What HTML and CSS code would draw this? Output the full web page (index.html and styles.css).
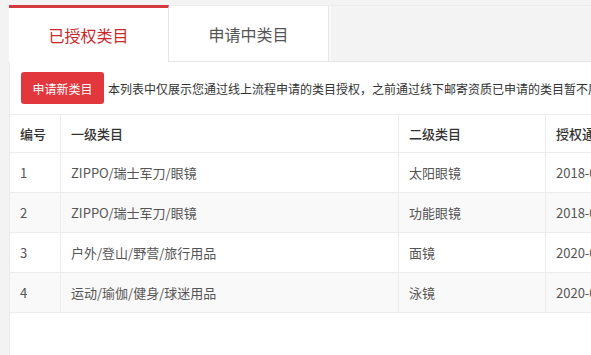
FILE: index.html
```html
<!DOCTYPE html>
<html lang="zh-CN">
<head>
  <meta charset="UTF-8">
  <title>类目授权</title>
  <link rel="stylesheet" href="styles.css">
</head>
<body>

<div class="page">
  <div class="tabs">
    <div class="tab active">已授权类目</div>
    <div class="tab">申请中类目</div>
    <div class="tab-rest"></div>
  </div>

  <div class="panel">
    <div class="toolbar">
      <button class="btn">申请新类目</button>
      <span class="tip">本列表中仅展示您通过线上流程申请的类目授权，之前通过线下邮寄资质已申请的类目暂不展示</span>
    </div>

    <table class="grid">
      <thead>
        <tr>
          <th class="c-no">编号</th>
          <th class="c-first">一级类目</th>
          <th class="c-second">二级类目</th>
          <th class="c-date">授权通过时间</th>
        </tr>
      </thead>
      <tbody>
        <tr><td>1</td><td>ZIPPO/瑞士军刀/眼镜</td><td>太阳眼镜</td><td>2018-06-12 10:21:36</td></tr>
        <tr><td>2</td><td>ZIPPO/瑞士军刀/眼镜</td><td>功能眼镜</td><td>2018-06-12 10:21:36</td></tr>
        <tr><td>3</td><td>户外/登山/野营/旅行用品</td><td>面镜</td><td>2020-03-05 14:08:19</td></tr>
        <tr><td>4</td><td>运动/瑜伽/健身/球迷用品</td><td>泳镜</td><td>2020-03-05 14:08:19</td></tr>
      </tbody>
    </table>
  </div>
</div>

</body>
</html>
```

FILE: styles.css
```css
html, body { height: 100%; }
body { margin: 0; background: #f3f3f3; font-family: "Noto Sans CJK SC", "Microsoft YaHei", sans-serif; color: #555; overflow: hidden; }
.page { width: 760px; padding: 5px 0 0 9px; height: 100%; box-sizing: border-box; display: flex; flex-direction: column; }

.tabs { display: flex; height: 56px; border-bottom: 1px solid #e6e6e6; }
.tab { width: 160px; display: flex; align-items: center; justify-content: center; font-size: 16px; color: #555; background: #fff; border-top: 1px solid #ececec; border-right: 1px solid #e6e6e6; box-sizing: border-box; padding-top: 1px; }
.tab.active { border-top: 3px solid #d3393d; color: #c9282d; margin-bottom: -1px; padding-top: 0; }
.tab-rest { flex: 1; border-left: 2px solid #f9f9f9; border-top: 1px solid #ececec; }

.panel { flex: 1; background: #fff; border-left: 1px solid #ebebeb; padding-top: 10px; }
.toolbar { display: flex; align-items: center; padding: 0 11px; margin-bottom: 10px; white-space: nowrap; }
.btn { height: 32px; width: 83px; border: 0; border-radius: 3px; background: #e1373d; color: #fff; font-family: inherit; font-size: 12px; padding: 0; margin-right: 4px; }
.tip { font-size: 12px; color: #333; }

.grid { border-collapse: collapse; table-layout: fixed; width: 698px; font-size: 13px; }
.grid th, .grid td { border: 1px solid #ececec; padding: 0 10px; text-align: left; white-space: nowrap; overflow: hidden; }
.grid tr > :first-child { border-left: 0; }
.grid th { height: 37px; font-weight: 500; color: #333; background: #fff; }
.grid td { height: 39px; color: #555; }
.grid tbody tr:nth-child(even) td { background: #f9f9f9; }
.c-no { width: 30px; }
.c-first { width: 317px; }
.c-second { width: 126px; }
.c-date { width: 145px; }
```
